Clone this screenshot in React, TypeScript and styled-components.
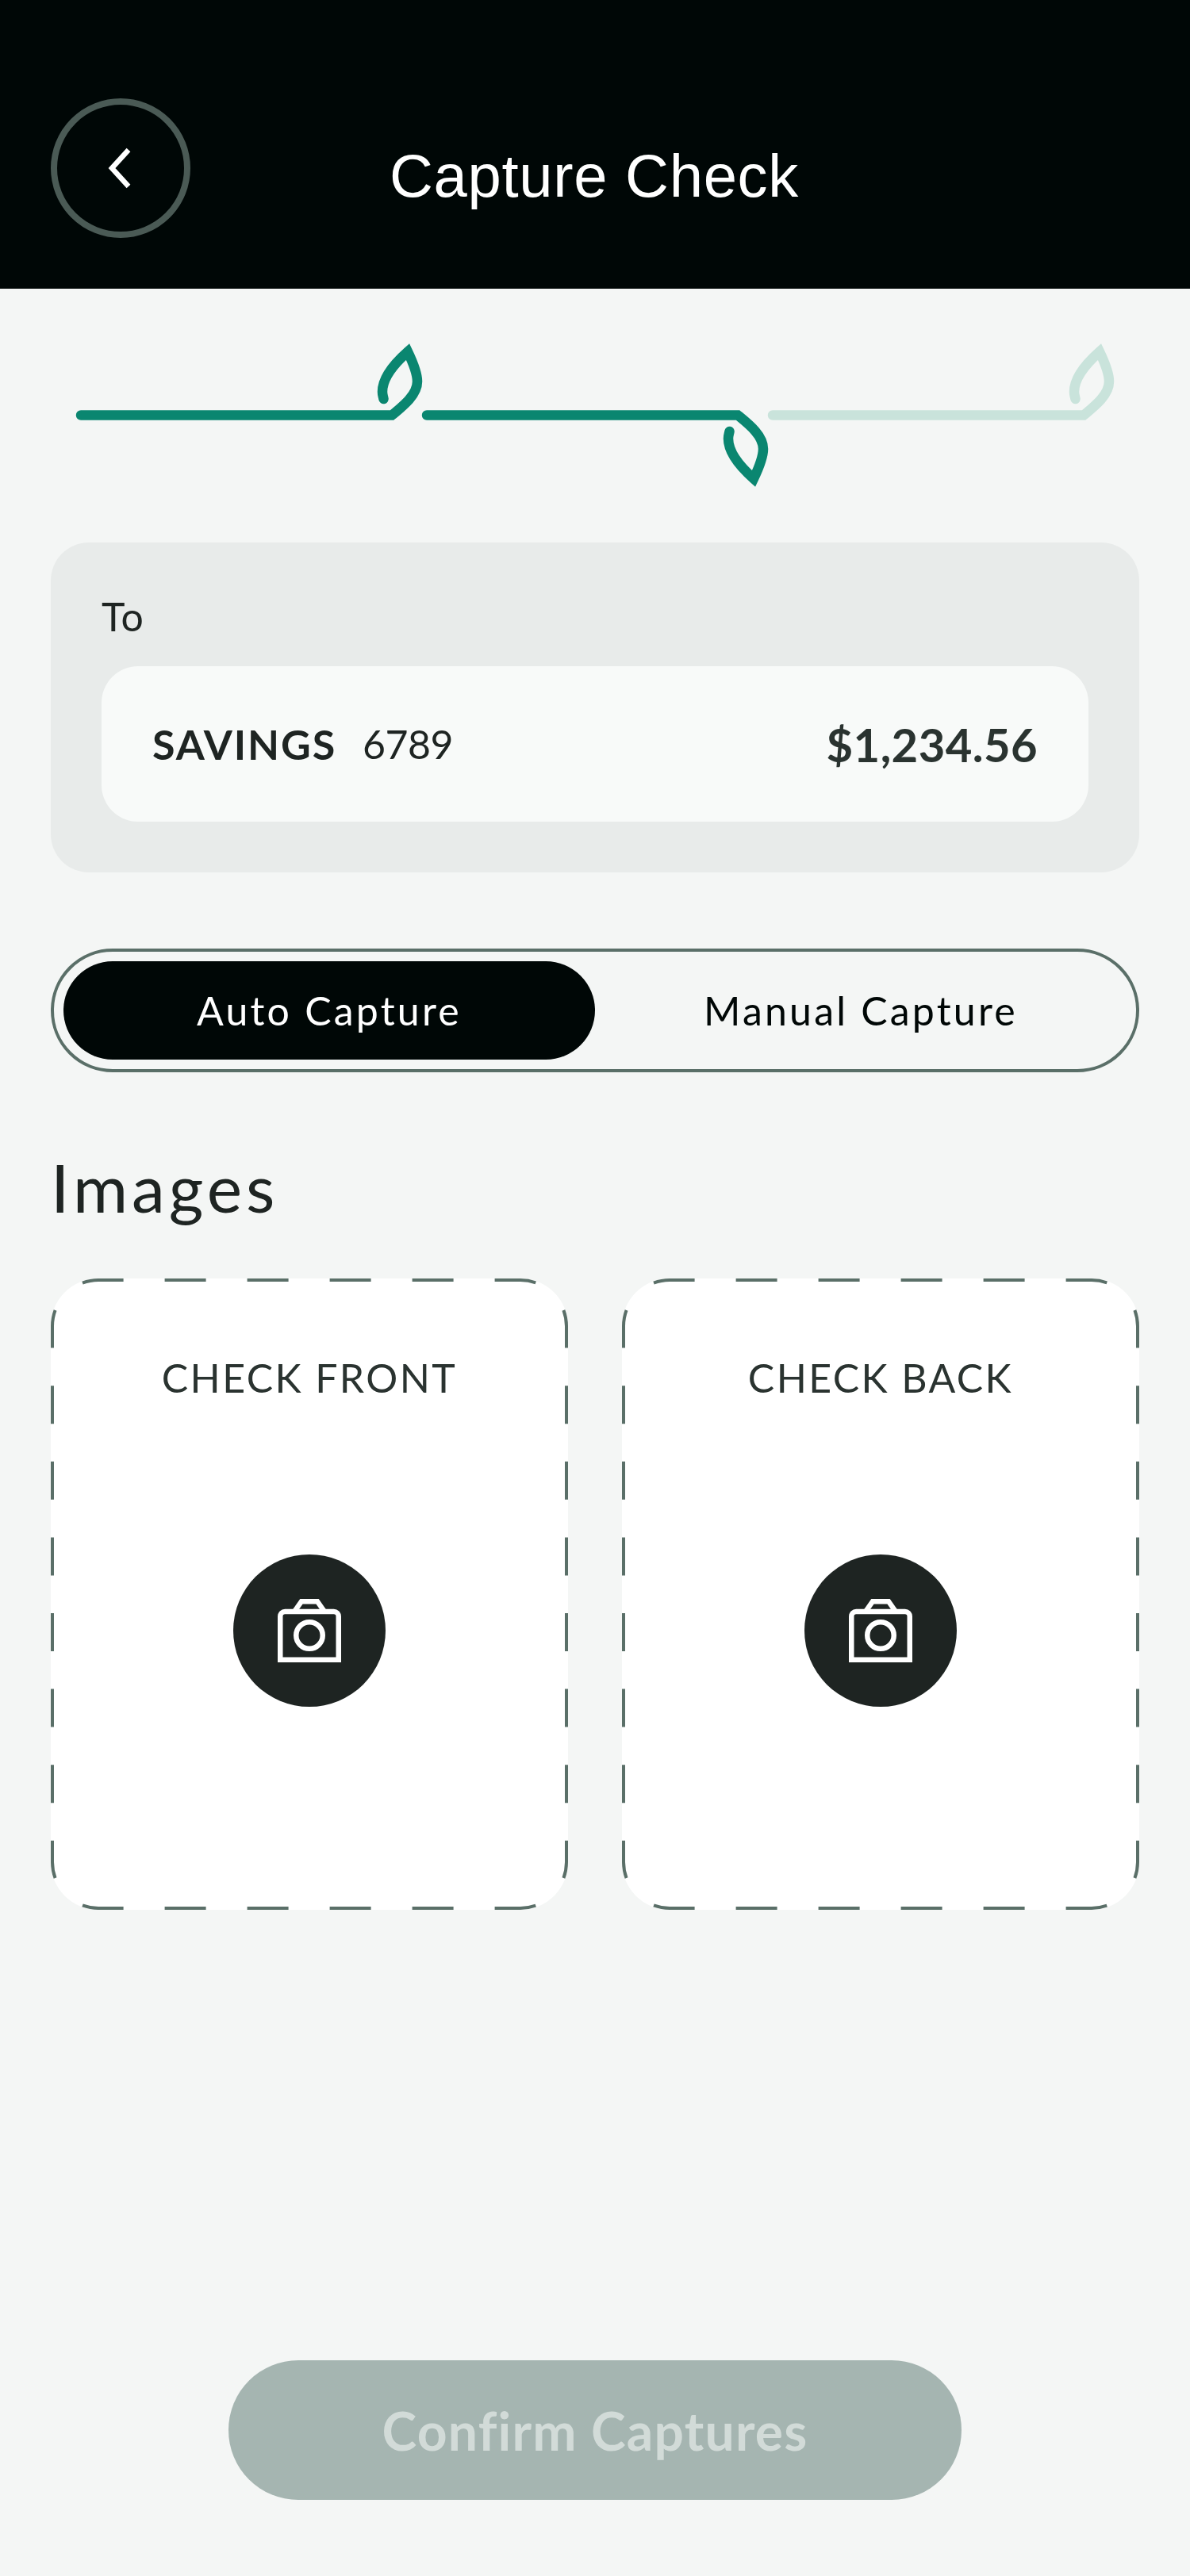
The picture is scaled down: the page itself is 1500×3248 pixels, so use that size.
import styled, { createGlobalStyle } from "styled-components";

const GlobalStyle = createGlobalStyle`
  html, body {
    margin: 0;
    padding: 0;
    background: #f4f6f5;
  }
  * {
    box-sizing: border-box;
  }
`;

const Screen = styled.div`
  width: 1500px;
  height: 3248px;
  display: flex;
  flex-direction: column;
  background: #f4f6f5;
  font-family: "Lato", "Liberation Sans", sans-serif;
  color: #1e2422;
`;

const Header = styled.header`
  height: 364px;
  padding: 124px 64px 0;
  background: #000706;
  display: flex;
  align-items: flex-start;
`;

const BackButton = styled.div`
  width: 176px;
  height: 176px;
  border: 8px solid #4a5a55;
  border-radius: 50%;
  display: flex;
  align-items: center;
  justify-content: center;
`;

const Title = styled.h1`
  margin: 54px 0 0 251px;
  font-family: "Liberation Sans", sans-serif;
  font-size: 76px;
  font-weight: 400;
  line-height: 88px;
  letter-spacing: 0.7px;
  color: #ffffff;
`;

const Stepper = styled.div`
  margin-top: 64px;
  padding-left: 96px;
  display: flex;
  height: 190px;
`;

const AccountPanel = styled.section`
  margin: 66px 64px 0;
  height: 416px;
  padding: 64px;
  border-radius: 48px;
  background: #e8ebea;
`;

const PanelLabel = styled.div`
  font-size: 50px;
  font-weight: 400;
  line-height: 58px;
  letter-spacing: 1px;
`;

const AccountRow = styled.div`
  margin-top: 34px;
  height: 196px;
  padding: 0 64px;
  border-radius: 46px;
  background: #f8faf9;
  display: flex;
  align-items: center;
`;

const AccountName = styled.span`
  font-size: 52px;
  font-weight: 700;
  letter-spacing: 1.9px;
`;

const AccountNumber = styled.span`
  margin-left: 33px;
  font-size: 50px;
  font-weight: 400;
  letter-spacing: -0.5px;
`;

const Amount = styled.span`
  margin-left: auto;
  font-size: 58px;
  font-weight: 700;
  letter-spacing: 0.4px;
  color: #2a3330;
`;

const CaptureToggle = styled.div`
  margin: 96px 64px 0;
  height: 156px;
  padding: 12px;
  border: 4px solid #5a6f68;
  border-radius: 78px;
  display: flex;
`;

const ToggleOption = styled.div<{ $active?: boolean }>`
  flex: 1;
  border-radius: 62px;
  display: flex;
  align-items: center;
  justify-content: center;
  font-size: 50px;
  letter-spacing: 3.2px;
  background: ${(p) => (p.$active ? "#000706" : "transparent")};
  color: ${(p) => (p.$active ? "#ffffff" : "#000706")};
`;

const SectionTitle = styled.h2`
  margin: 95px 64px 0;
  font-size: 84px;
  font-weight: 400;
  line-height: 100px;
  letter-spacing: 5px;
`;

const CaptureGrid = styled.div`
  margin: 65px 64px 0;
  display: grid;
  grid-template-columns: 652px 652px;
  justify-content: space-between;
`;

const CaptureCard = styled.div`
  position: relative;
  height: 796px;
  padding-top: 93px;
  border-radius: 60px;
  background: #ffffff;
  display: flex;
  flex-direction: column;
  align-items: center;
`;

const DashFrame = styled.svg`
  position: absolute;
  inset: 0;
`;

const CardLabel = styled.div`
  font-size: 50px;
  line-height: 64px;
  letter-spacing: 2.4px;
  color: #2a3330;
`;

const CameraButton = styled.div`
  margin-top: 191px;
  width: 192px;
  height: 192px;
  border-radius: 50%;
  background: #1e2422;
  display: flex;
  align-items: center;
  justify-content: center;
`;

const ConfirmButton = styled.button`
  margin: auto auto 96px;
  width: 924px;
  height: 176px;
  border: 0;
  border-radius: 88px;
  background: #a5b5b1;
  color: #d2dbd8;
  font-family: inherit;
  font-size: 66px;
  font-weight: 700;
  letter-spacing: 1.2px;
`;

// the middle step hangs its leaf below the line, so it flips around the line itself
const StepSvg = styled.svg<{ $flip?: boolean }>`
  overflow: visible;
  transform-origin: 50% 95.5px;
  transform: ${(p) => (p.$flip ? "scaleY(-1)" : "none")};
`;

const stepPath =
  "M6 95.5 H398 C412 84 430 70 430 53 C430 42 424 28 418 15.5 C405 27 386 47 386 66 C386 70 387 72 387.5 75";

function StepMark({ color, flip }: { color: string; flip?: boolean }) {
  return (
    <StepSvg $flip={flip} width="436" height="190" viewBox="0 0 436 190" fill="none">
      <path
        d={stepPath}
        stroke={color}
        strokeWidth="12.5"
        strokeLinecap="round"
        strokeLinejoin="miter"
        strokeMiterlimit="10"
      />
    </StepSvg>
  );
}

function DashedBorder() {
  return (
    <DashFrame width="652" height="796" viewBox="0 0 652 796" fill="none">
      <g stroke="#5a6f68" strokeWidth="4">
        <path d="M40 5.6 A58 58 0 0 1 60 2 H592 A58 58 0 0 1 612 5.6" strokeDasharray="52 52" />
        <path d="M40 790.4 A58 58 0 0 0 60 794 H592 A58 58 0 0 0 612 790.4" strokeDasharray="52 52" />
        <path d="M5.6 40 A58 58 0 0 0 2 60 V736 A58 58 0 0 0 5.6 756" strokeDasharray="48 47.6" />
        <path d="M646.4 40 A58 58 0 0 1 650 60 V736 A58 58 0 0 1 646.4 756" strokeDasharray="48 47.6" />
      </g>
    </DashFrame>
  );
}

function CameraIcon() {
  return (
    <svg width="80" height="80" viewBox="0 0 80 80" fill="none" stroke="#ffffff" strokeWidth="6.5">
      <path d="M3.25 76.75 V22 a6 6 0 0 1 6 -6 H70.75 a6 6 0 0 1 6 6 V76.75 Z" />
      <path d="M21 16 L30 3.25 H50 L59 16" />
      <circle cx="40" cy="46" r="16.75" />
    </svg>
  );
}

function CheckSide({ label }: { label: string }) {
  return (
    <CaptureCard>
      <DashedBorder />
      <CardLabel>{label}</CardLabel>
      <CameraButton>
        <CameraIcon />
      </CameraButton>
    </CaptureCard>
  );
}

export default function App() {
  return (
    <Screen>
      <GlobalStyle />
      <Header>
        <BackButton>
          <svg width="32" height="56" viewBox="0 0 32 56" fill="none">
            <path d="M26 5 L5 28 L26 51" stroke="#ffffff" strokeWidth="6.5" />
          </svg>
        </BackButton>
        <Title>Capture Check</Title>
      </Header>
      <Stepper>
        <StepMark color="#0a8670" />
        <StepMark color="#0a8670" flip />
        <StepMark color="#c9e3db" />
      </Stepper>
      <AccountPanel>
        <PanelLabel>To</PanelLabel>
        <AccountRow>
          <AccountName>SAVINGS</AccountName>
          <AccountNumber>6789</AccountNumber>
          <Amount>$1,234.56</Amount>
        </AccountRow>
      </AccountPanel>
      <CaptureToggle>
        <ToggleOption $active>Auto Capture</ToggleOption>
        <ToggleOption>Manual Capture</ToggleOption>
      </CaptureToggle>
      <SectionTitle>Images</SectionTitle>
      <CaptureGrid>
        <CheckSide label="CHECK FRONT" />
        <CheckSide label="CHECK BACK" />
      </CaptureGrid>
      <ConfirmButton>Confirm Captures</ConfirmButton>
    </Screen>
  );
}
